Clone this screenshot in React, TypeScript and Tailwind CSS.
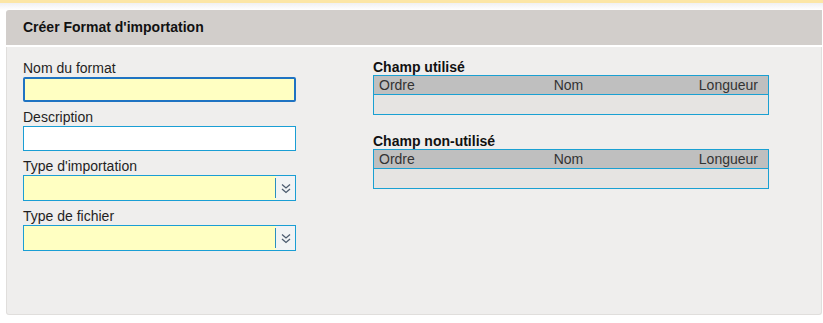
import React from 'react';

const ChevronsDown: React.FC = () => (
  <svg width="10" height="11" viewBox="0 0 10 11" fill="none" stroke="#4b5b6e" strokeWidth="1.3">
    <path d="M1 1.5 L5 5 L9 1.5" />
    <path d="M1 6 L5 9.5 L9 6" />
  </svg>
);

const Field: React.FC<{ label: string; children: React.ReactNode }> = ({ label, children }) => (
  <div className="mb-[7px]">
    <div className="text-[14px] leading-[17px] text-[#1f1f1f]">{label}</div>
    {children}
  </div>
);

const SelectBox: React.FC = () => (
  <div className="flex h-[26px] w-[273px] border border-[#1a9ed4] bg-[#ffffc2]">
    <div className="flex-1" />
    <div className="my-[2px] w-px bg-[#2a8fc0]" />
    <div className="flex w-[19px] items-center justify-center bg-[#f1f3f4]">
      <ChevronsDown />
    </div>
  </div>
);

const FieldTable: React.FC<{ title: string }> = ({ title }) => (
  <div className="mb-[19px]">
    <div className="text-[14px] font-bold leading-[15px] text-[#111]">{title}</div>
    <div className="border border-[#1aa0d2]">
      <div className="grid h-[18px] grid-cols-3 bg-[#bfbfbf] pl-[5px] pr-[10px] text-[14px] leading-[18px] text-[#333]">
        <span>Ordre</span>
        <span className="text-center">Nom</span>
        <span className="text-right">Longueur</span>
      </div>
      <div className="h-[20px] border-t border-[#1aa0d2] bg-[#e6e4e2]" />
    </div>
  </div>
);

const App: React.FC = () => {
  return (
    <div className="h-[323px] w-[823px] overflow-hidden bg-white font-['Liberation_Sans',Arial,sans-serif]">
      {/* barre du haut */}
      <div className="h-[3px] bg-[#fce6a6]" />
      <div className="h-[7px] bg-gradient-to-b from-[#f0f0f2] to-white" />

      <div className="ml-[6px] mr-[1px]">
        {/* Titre */}
        <div className="flex h-[35px] items-center rounded-tl-[3px] bg-[#d2cecb] pl-[17px] text-[14px] font-bold text-[#111]">
          Créer Format d'importation
        </div>
        <div className="h-[2px] bg-white" />

        {/* Contenu */}
        <div className="flex h-[268px] rounded-b-[3px] border border-t-0 border-[#e0dedc] bg-[#efeeed] pl-[16px] pt-[13px]">
          <div className="w-[274px]">
            <Field label="Nom du format">
              <div className="h-[25px] w-[273px] rounded-[2px] border-2 border-[#1f73c2] bg-[#ffffc2]" />
            </Field>
            <Field label="Description">
              <div className="h-[25px] w-[273px] border border-[#1a9ed4] bg-white" />
            </Field>
            <Field label="Type d'importation">
              <SelectBox />
            </Field>
            <Field label="Type de fichier">
              <SelectBox />
            </Field>
          </div>

          <div className="ml-[76px] w-[396px]">
            <FieldTable title="Champ utilisé" />
            <FieldTable title="Champ non-utilisé" />
          </div>
        </div>
      </div>
    </div>
  );
};

export default App;
